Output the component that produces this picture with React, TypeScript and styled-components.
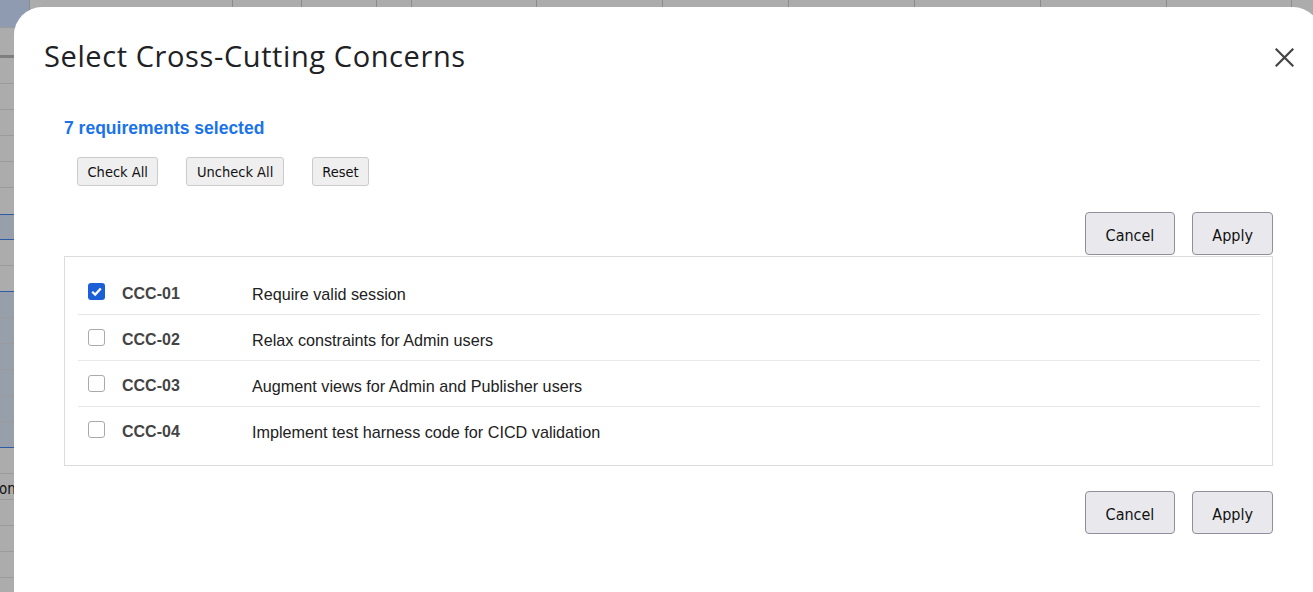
import React from "react";
import styled, { createGlobalStyle } from "styled-components";

const Global = createGlobalStyle`
  html, body { margin: 0; padding: 0; }
  body { font-family: "Liberation Sans", Arial, sans-serif; }
  * { box-sizing: border-box; }
`;

/* ---------- dimmed spreadsheet behind the dialog ---------- */
const Sheet = styled.div`
  position: fixed;
  inset: 0;
  background: #acacac;
  overflow: hidden;
  font-family: "DejaVu Sans Condensed", "DejaVu Sans", sans-serif;
  font-size: 15px;
  color: #111;
`;

const SheetHead = styled.div`
  display: flex;
  height: 28px;
  border-bottom: 1px solid #9b9b9b;
`;

const HeadCell = styled.div<{ $w: number; $corner?: boolean }>`
  flex: none;
  width: ${(p) => p.$w}px;
  height: 100%;
  border-right: 1px solid #8c8c8c;
  background: ${(p) => (p.$corner ? "#8e9bb1" : "transparent")};
`;

const SheetRow = styled.div<{ $h: number; $sel?: boolean; $edge?: "blue" | "thick" }>`
  height: ${(p) => p.$h}px;
  display: flex;
  align-items: center;
  padding-top: 4px;
  background: ${(p) => (p.$sel ? "#979fab" : "transparent")};
  border-bottom: ${(p) =>
    p.$edge === "thick"
      ? "3px solid #7f7f7f"
      : p.$edge === "blue"
      ? "1px solid #2d5ca8"
      : "1px solid #9b9b9b"};
`;

const CellText = styled.span`
  margin-left: -1px;
  white-space: nowrap;
`;

/* ---------- dialog ---------- */
const Dialog = styled.div`
  position: fixed;
  left: 14px;
  top: 7px;
  right: -8px;
  bottom: -40px;
  background: #fff;
  border-radius: 28px;
  display: flex;
  flex-direction: column;
`;

const Header = styled.div`
  display: flex;
  align-items: center;
  justify-content: space-between;
  padding: 31px 27px 0 30px;
`;

const Title = styled.h2`
  margin: 0;
  font-family: "Open Sans", sans-serif;
  font-weight: 400;
  font-size: 29px;
  line-height: 36px;
  color: #202124;
  letter-spacing: 0.6px;
`;

const Close = styled.button`
  border: 0;
  background: transparent;
  padding: 0;
  width: 19px;
  height: 19px;
  margin-top: 3px;
  display: flex;
  cursor: pointer;
`;

const Body = styled.div`
  display: flex;
  flex-direction: column;
  padding: 0 48px 0 50px;
`;

const Count = styled.div`
  margin-top: 44px;
  font-weight: 700;
  font-size: 17.5px;
  line-height: 20px;
  color: #1a73e8;
`;

const Toolbar = styled.div`
  display: flex;
  gap: 28px;
  margin: 19px 0 0 13px;
`;

const SmallButton = styled.button`
  height: 29px;
  padding: 1px 9.5px 0;
  font-family: "DejaVu Sans Condensed", "DejaVu Sans", sans-serif;
  font-size: 14.5px;
  color: #111;
  background: #efefef;
  border: 1px solid #cbcbcb;
  border-radius: 3px;
`;

const Actions = styled.div<{ $top: number }>`
  display: flex;
  justify-content: flex-end;
  gap: 17px;
  margin-top: ${(p) => p.$top}px;
`;

const ActionButton = styled.button`
  height: 43px;
  padding: 3px 20px 0;
  font-family: "DejaVu Sans Condensed", "DejaVu Sans", sans-serif;
  font-size: 16px;
  color: #111;
  background: #e9e9ed;
  border: 1px solid #8f8f9d;
  border-radius: 4px;
  &:last-child {
    padding: 3px 19px 0;
  }
`;

const ListBox = styled.div`
  margin-top: 1px;
  border: 1px solid #dcdcdc;
  padding: 12px 12px 13px 13px;
`;

const Row = styled.label`
  display: grid;
  grid-template-columns: 17px 113px 1fr;
  column-gap: 17px;
  align-items: center;
  height: 46px;
  padding-left: 10px;
  font-size: 16px;
  & + & {
    border-top: 1px solid #e8e8e8;
  }
  &:first-child {
    height: 45px;
  }
`;

const Box = styled.span<{ $checked: boolean }>`
  width: 17px;
  height: 17px;
  border-radius: 3px;
  display: flex;
  align-items: center;
  justify-content: center;
  background: ${(p) => (p.$checked ? "#1b5fd6" : "#fff")};
  border: ${(p) => (p.$checked ? "none" : "1.5px solid #a9a9b1")};
`;

const Code = styled.span`
  padding-top: 5px;
  font-weight: 700;
  color: #444;
`;

const Desc = styled.span`
  padding-top: 5px;
  font-size: 16.2px;
  color: #222;
`;

const headCols = [30, 203, 69, 75, 35, 125, 126, 126, 126, 126, 126, 125, 200];

type SRow = { h: number; sel?: boolean; edge?: "blue" | "thick"; text?: string };
const sheetRows: SRow[] = [
  { h: 30, edge: "thick" },
  { h: 26 },
  { h: 26 },
  { h: 26 },
  { h: 26 },
  { h: 26 },
  { h: 27, edge: "blue" },
  { h: 25, sel: true, edge: "blue" },
  { h: 26 },
  { h: 26, edge: "blue" },
  { h: 26, sel: true },
  { h: 26, sel: true },
  { h: 26, sel: true },
  { h: 26, sel: true },
  { h: 26, sel: true },
  { h: 26, sel: true, edge: "blue" },
  { h: 26 },
  { h: 26, text: "on" },
  { h: 26 },
  { h: 26 },
  { h: 26 },
  { h: 26 },
];

const items = [
  { code: "CCC-01", desc: "Require valid session", checked: true },
  { code: "CCC-02", desc: "Relax constraints for Admin users", checked: false },
  { code: "CCC-03", desc: "Augment views for Admin and Publisher users", checked: false },
  { code: "CCC-04", desc: "Implement test harness code for CICD validation", checked: false },
];

export default function App() {
  return (
    <>
      <Global />
      <Sheet>
        <SheetHead>
          {headCols.map((w, i) => (
            <HeadCell key={i} $w={w} $corner={i === 0} />
          ))}
        </SheetHead>
        {sheetRows.map((r, i) => (
          <SheetRow key={i} $h={r.h} $sel={r.sel} $edge={r.edge}>
            {r.text && <CellText>{r.text}</CellText>}
          </SheetRow>
        ))}
      </Sheet>
      <Dialog role="dialog">
        <Header>
          <Title>Select Cross-Cutting Concerns</Title>
          <Close aria-label="Close">
            <svg width="19" height="19" viewBox="0 0 19 19">
              <path d="M1.5 1.5 L17.5 17.5 M17.5 1.5 L1.5 17.5" stroke="#444" strokeWidth="2.2" strokeLinecap="square" />
            </svg>
          </Close>
        </Header>
        <Body>
          <Count>7 requirements selected</Count>
          <Toolbar>
            <SmallButton>Check All</SmallButton>
            <SmallButton>Uncheck All</SmallButton>
            <SmallButton>Reset</SmallButton>
          </Toolbar>
          <Actions $top={26}>
            <ActionButton>Cancel</ActionButton>
            <ActionButton>Apply</ActionButton>
          </Actions>
          <ListBox>
            {items.map((it) => (
              <Row key={it.code}>
                <Box $checked={it.checked}>
                  {it.checked && (
                    <svg width="13" height="13" viewBox="0 0 13 13">
                      <path d="M2.2 6.8 L5.2 9.6 L10.8 3.4" fill="none" stroke="#fff" strokeWidth="2.2" />
                    </svg>
                  )}
                </Box>
                <Code>{it.code}</Code>
                <Desc>{it.desc}</Desc>
              </Row>
            ))}
          </ListBox>
          <Actions $top={25}>
            <ActionButton>Cancel</ActionButton>
            <ActionButton>Apply</ActionButton>
          </Actions>
        </Body>
      </Dialog>
    </>
  );
}
